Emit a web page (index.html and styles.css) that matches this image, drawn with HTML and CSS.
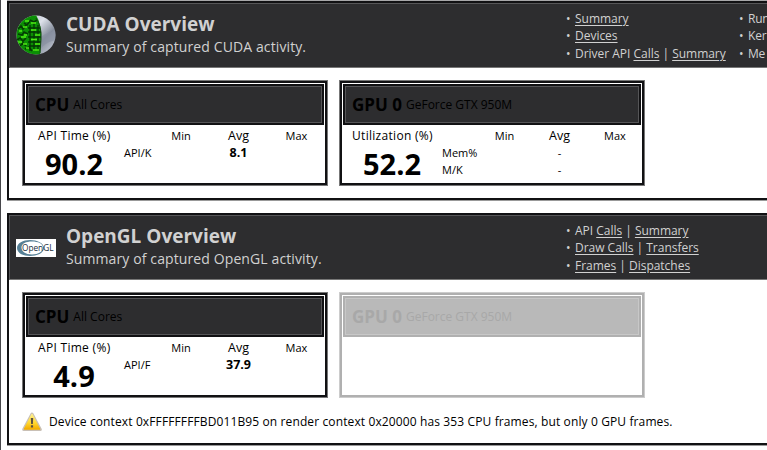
FILE: index.html
```
<!DOCTYPE html>
<html lang="en">
<head>
<meta charset="utf-8">
<title>Activity Overview</title>
<link rel="stylesheet" href="styles.css">
</head>
<body>
<main class="report">
  <section class="panel cuda">
    <header class="panel-head">
      <svg class="logo" viewBox="0 0 40 40" aria-hidden="true">
        <defs>
          <linearGradient id="silver" x1="0" y1="0" x2="1" y2="1">
            <stop offset="0" stop-color="#b0b6c2"/><stop offset=".4" stop-color="#dde1ea"/><stop offset=".65" stop-color="#858d9c"/><stop offset="1" stop-color="#d5dae4"/>
          </linearGradient>
          <clipPath id="ball"><circle cx="20" cy="20" r="19.5"/></clipPath>
        </defs>
        <g clip-path="url(#ball)">
          <rect width="40" height="40" fill="url(#silver)"/>
          <path d="M25 22q6-5 15-6v9q-8 1-15 8z" fill="#8891a1" opacity=".65"/>
          <path d="M0 0H20Q26 10 25 24L24 40H0z" fill="#0b8f05"/>
          <path d="M2 14l3-3 2 3 3-4M2 19l4 1 2-3 4 2M1 25l3-2 3 3 3-3M4 31l3-3 3 3M8 8l3 2 3-4M9 34l4-2 3 4M14 5l4 2 3-2" stroke="#053a04" fill="none" stroke-width="1.6"/>
          <path d="M12 13h12M12 17h13M12 22h13M12 27h13M13 31h11M14 10v26M18 6v30M22 10v26" stroke="#053604" stroke-width="1.3"/>
          <path d="M3 16h3M7 12h4M5 22h5M2 27h4M7 29h4M9 6h4M15 15h5M19 20h5M15 24.500h6M19 29h5M17 35h6M8 20h3M15 8h5M10 33h3" stroke="#52ec16" stroke-width="1.6"/>
          <path d="M20 3Q26 12 25 24l-1 14" stroke="#164815" fill="none"/>
        </g>
      </svg>
      <div class="heading"><h1>CUDA Overview</h1><p>Summary of captured CUDA activity.</p></div>
      <ul class="links">
        <li><a>Summary</a></li><li><a>Devices</a></li><li>Driver API <a>Calls</a> | <a>Summary</a></li>
      </ul>
      <ul class="links more">
        <li>Run</li><li>Ker</li><li>Me</li>
      </ul>
    </header>
    <div class="cards">
      <article class="card cpu">
        <h2><b>CPU</b> <span>All Cores</span></h2>
        <div class="stats"><div class="main"><span>API Time (%)</span><strong>90.2</strong></div>
          <div class="table"><i></i><i>Min</i><i class="avg">Avg</i><i>Max</i>
          <i class="label">API/K</i><i></i><i class="value">8.1</i><i></i></div></div>
      </article>
      <article class="card gpu">
        <h2><b>GPU 0</b> <span>GeForce GTX 950M</span></h2>
        <div class="stats"><div class="main"><span>Utilization (%)</span><strong>52.2</strong></div>
          <div class="table"><i></i><i>Min</i><i class="avg">Avg</i><i>Max</i>
          <i class="label">Mem%</i><i></i><i>-</i><i></i><i class="label">M/K</i><i></i><i>-</i><i></i></div></div>
      </article>
    </div>
  </section>
  <section class="panel opengl">
    <header class="panel-head">
      <svg class="logo gl" viewBox="0 0 40 18" aria-hidden="true">
        <rect width="40" height="18" fill="#fff"/>
        <path fill-rule="evenodd" fill="#568096" d="M1 9C1 4 7 1 14 1s14 3 14 8-7 8-14 8S1 14 1 9zm4.500-.5c0 4 4 7 10.500 7s11-3 11-7-5-6-11-6-10.500 2-10.500 6z"/>
        <text class="gl-text" x="6" y="12.3" textLength="31.500" lengthAdjust="spacingAndGlyphs">OpenGL</text>
      </svg>
      <div class="heading"><h1>OpenGL Overview</h1><p>Summary of captured OpenGL activity.</p></div>
      <ul class="links">
        <li>API <a>Calls</a> | <a>Summary</a></li><li><a>Draw Calls</a> | <a>Transfers</a></li><li><a>Frames</a> | <a>Dispatches</a></li>
      </ul>
    </header>
    <div class="cards">
      <article class="card cpu">
        <h2><b>CPU</b> <span>All Cores</span></h2>
        <div class="stats"><div class="main"><span>API Time (%)</span><strong>4.9</strong></div>
          <div class="table"><i></i><i>Min</i><i class="avg">Avg</i><i>Max</i>
          <i class="label">API/F</i><i></i><i class="value">37.9</i><i></i></div></div>
      </article>
      <article class="card gpu disabled">
        <h2><b>GPU 0</b> <span>GeForce GTX 950M</span></h2>
      </article>
    </div>
    <p class="warning">
      <svg viewBox="0 0 20 20" aria-hidden="true"><defs><linearGradient id="amber" x2="0" y2="1"><stop stop-color="#fff08b"/><stop offset=".6" stop-color="#ffd52d"/><stop offset="1" stop-color="#f3ad00"/></linearGradient></defs><path d="M10 2 18.300 17.500H1.700z" fill="#c9c0b6" stroke="#c9c0b6" stroke-width="3" stroke-linejoin="round"/><path d="M10 2.500 17.500 17H2.500z" fill="url(#amber)" stroke="url(#amber)" stroke-width="1.500" stroke-linejoin="round"/><path d="M8.800 6h2.400l-.3 6H9.100zM8.900 13.200h2.200v2.200H8.900z" fill="#5c5141"/></svg>
      <span>Device context 0xFFFFFFFFBD011B95 on render context 0x20000 has 353 CPU frames, but only 0 GPU frames.</span>
    </p>
  </section>
</main>
</body>
</html>
```
FILE: styles.css
```
* { box-sizing: border-box; }
body { margin: 0; background: #fff; color: #000; font: 12px/18px "Open Sans", "Noto Sans", sans-serif; overflow: hidden; }
h1, h2, p, ul { margin: 0; padding: 0; }
ul { list-style: none; }
i { font-style: normal; }
.report { width: 767px; height: 450px; overflow: hidden; border-left: 1px solid #47474b; padding: 1px 0 0 6px; }
.panel { width: 780px; border: 2px solid #111113; box-shadow: 0 1px #999; }
.cuda { height: 199px; margin-bottom: 13px; box-shadow: 0 1px #999, 0 -1px #a7a7a9; }
.opengl { height: 232px; }
.panel-head { height: 65px; display: flex; align-items: flex-start; background: #2d2d2f; color: #d1d1d1; border-top: 1px solid #565658; border-left: 1px solid #565658; border-bottom: 1px solid #777; white-space: nowrap; }
.logo { width: 40px; height: 40px; margin: 11px 0 0 6px; flex: none; }
.logo.gl { height: 18px; margin-top: 23px; }
.gl-text { font: 9.5px "Open Sans", sans-serif; fill: #172d3b; }
.heading { width: 510px; padding: 8px 0 0 10px; flex: none; }
.heading h1 { font-size: 19px; line-height: 24px; font-weight: 700; letter-spacing: 0; }
.heading p { font-size: 14px; line-height: 21px; letter-spacing: .11px; }
.links { width: 173px; padding-top: 6px; flex: none; line-height: 17.4px; letter-spacing: -.02px; }
.links.more { letter-spacing: -.2px; }
.links li { display: flex; white-space: pre; }
.links li::before { content: "•"; width: 9px; }
.links a { text-decoration: underline; text-underline-offset: 2px; }
.cards { display: flex; gap: 11px; padding: 11px 0 0 13px; margin-top: 1px; }
.card { width: 306px; height: 106px; border: 1px solid #777; outline: 2px solid #111113; outline-offset: -3px; padding: 3px; }
.card h2 { height: 41px; border: 2px solid #111113; box-shadow: inset 0 0 0 1px #555557; background: #2d2d2f; padding: 0 7px; display: flex; align-items: center; gap: 4px; font-weight: 400; }
.card h2 b { font-size: 17px; }
.card h2 span { font-size: 12px; }
.stats { display: flex; }
.main { width: 98px; padding: 2px 0 0 12px; white-space: nowrap; }
.main span { display: block; line-height: 18px; letter-spacing: .3px; }
.main strong { display: block; width: 72px; text-align: center; font-size: 29px; line-height: 38px; }
.gpu .main { width: 99px; padding-left: 9px; }
.gpu .main strong { width: 80px; }
.table { display: grid; grid-template-columns: 31px 52px 63px 53px; grid-template-rows: 17px 17px 18px; padding-top: 2px; text-align: center; font-size: 11px; }
.gpu .table { grid-template-columns: 38px 49px 61px 50px; }
.table .avg { font-size: 12.5px; }
.table .label { text-align: left; }
.table .value { font-size: 12.5px; font-weight: 700; }
.disabled { border-color: #ccc; outline-color: #b0b0b0; }
.disabled h2 { border-color: #b0b0b0; background: #b9b9b9; color: #a8a8a8; box-shadow: inset 0 0 0 1px #c7c7c7; }
.warning { display: flex; align-items: center; gap: 7px; padding: 14px 0 0 13px; white-space: nowrap; letter-spacing: .12px; }
.warning svg { width: 20px; height: 20px; }
```
